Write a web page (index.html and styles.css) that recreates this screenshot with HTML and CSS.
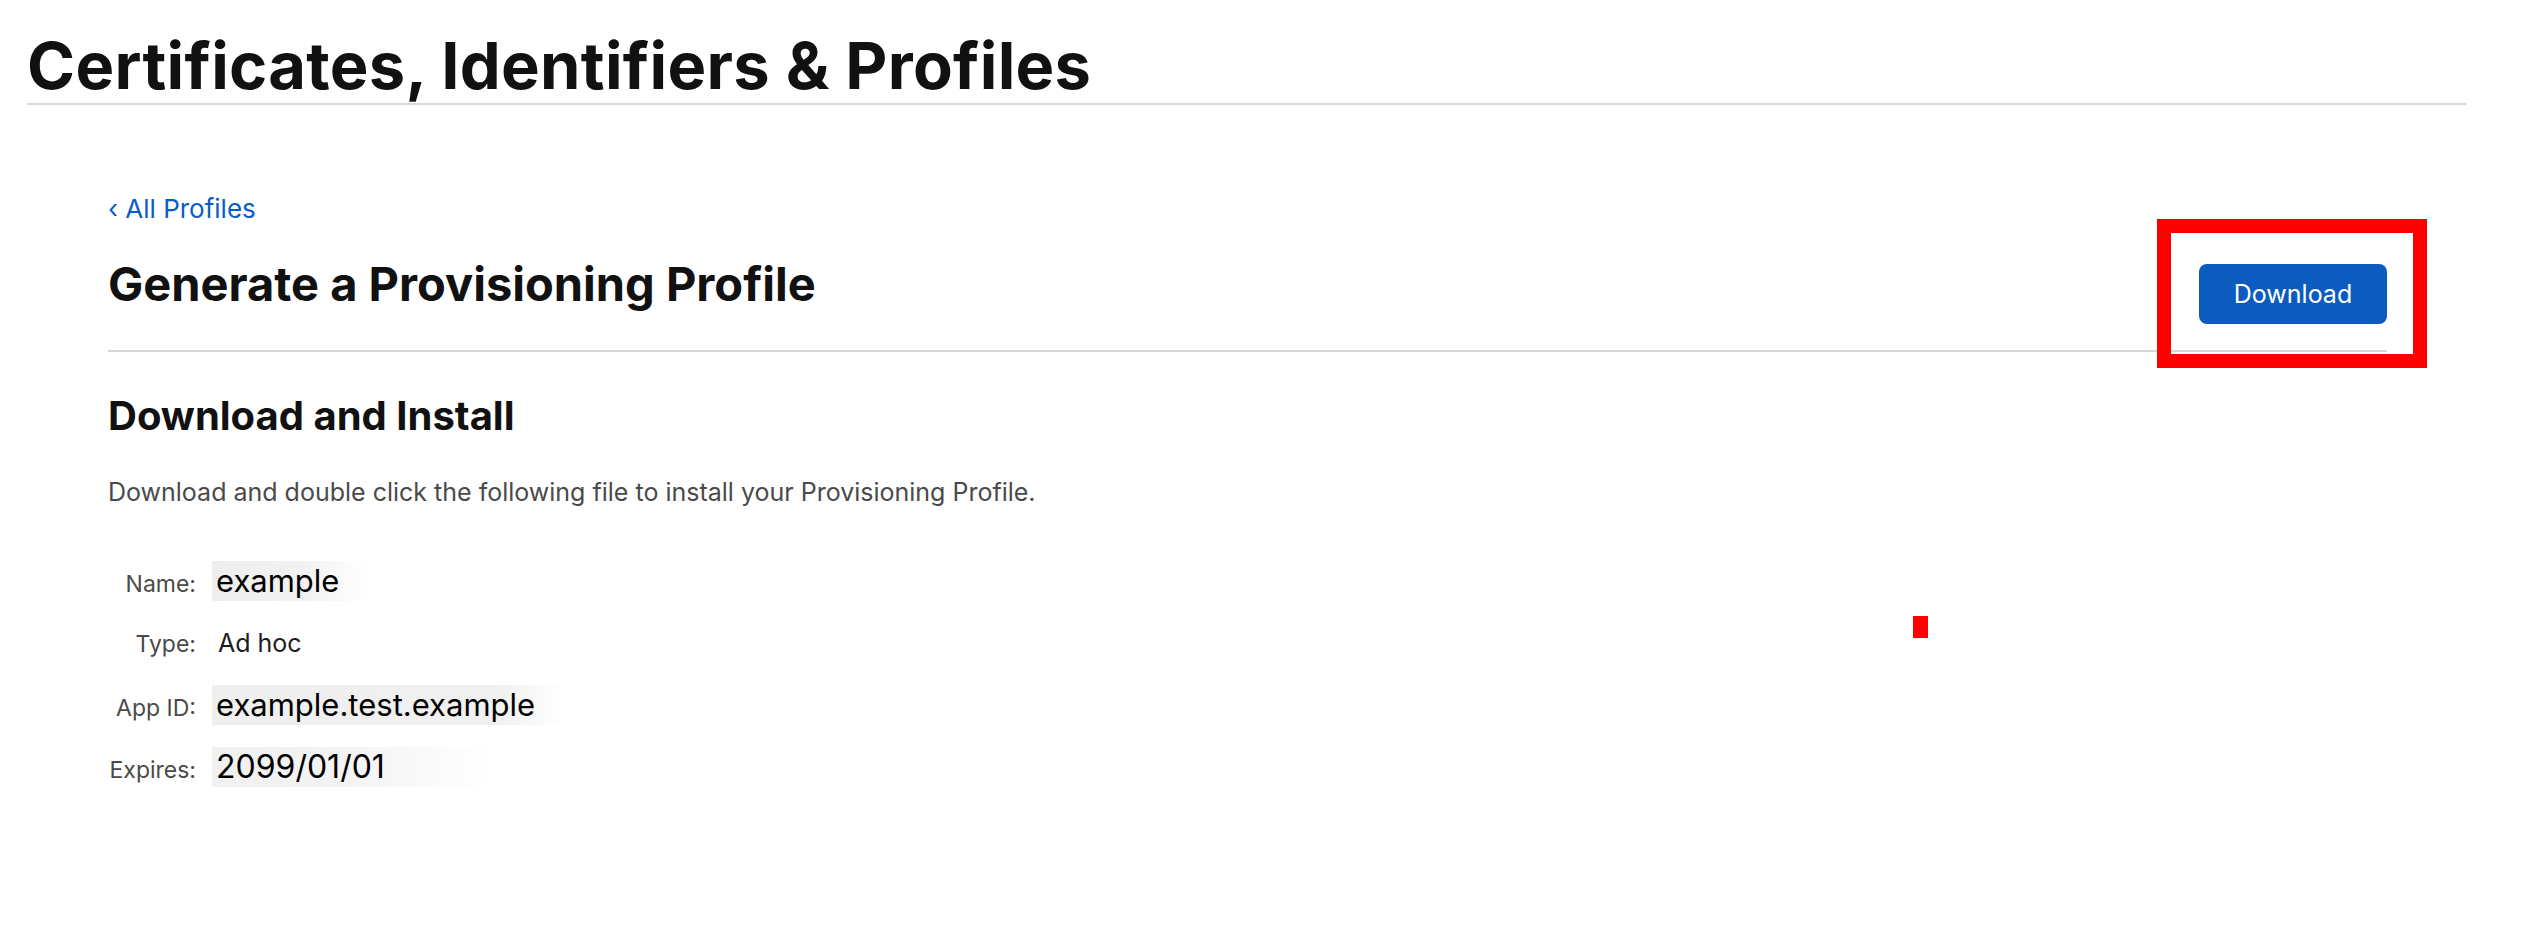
FILE: index.html
```html
<!DOCTYPE html>
<html lang="en">
<head>
<meta charset="utf-8">
<title>Certificates, Identifiers &amp; Profiles</title>
<link rel="stylesheet" href="styles.css">
</head>
<body>
<header class="top">
  <h1 class="top-title">Certificates, Identifiers &amp; Profiles</h1>
</header>
<main class="content">
  <a class="back" href="#">&lsaquo; All Profiles</a>
  <div class="head-row">
    <h2 class="page-title">Generate a Provisioning Profile</h2>
    <button class="btn">Download</button>
  </div>
  <h3 class="section-title">Download and Install</h3>
  <p class="desc">Download and double click the following file to install your Provisioning Profile.</p>
  <div class="details">
    <div class="label">Name:</div>
    <div class="value"><span class="smear smear-name">example</span></div>
    <div class="label">Type:</div>
    <div class="value"><span class="plain">Ad hoc</span></div>
    <div class="label">App ID:</div>
    <div class="value"><span class="smear smear-app">example.test.example</span></div>
    <div class="label">Expires:</div>
    <div class="value"><span class="smear smear-exp">2099/01/01</span></div>
  </div>
</main>
<div class="highlight"></div>
<div class="marker"></div>
</body>
</html>
```
FILE: styles.css
```css
html, body {
  margin: 0;
  padding: 0;
  background: #ffffff;
}
body {
  font-family: Inter, "Noto Sans", "Liberation Sans", sans-serif;
  color: #111111;
  width: 2524px;
  height: 940px;
  overflow: hidden;
  position: relative;
}
.top {
  margin: 0 57px 0 27px;
  padding-top: 30px;
  padding-bottom: 1px;
  border-bottom: 2px solid #dadada;
}
.top-title {
  margin: 0;
  font-size: 65px;
  line-height: 1.1;
  font-weight: 700;
  letter-spacing: 0.3px;
  color: #111111;
}
.content {
  margin: 0 137px 0 108px;
  padding-top: 88px;
}
.back {
  display: block;
  font-size: 26px;
  line-height: 1.2;
  color: #0a5dc4;
  text-decoration: none;
}
.head-row {
  display: flex;
  justify-content: space-between;
  align-items: flex-start;
  margin-top: 32px;
  padding-bottom: 26px;
  border-bottom: 2px solid #d7d7d7;
}
.page-title {
  margin: 0;
  font-size: 47px;
  line-height: 1.2;
  font-weight: 700;
  color: #111111;
}
.btn {
  margin-top: 8px;
  width: 188px;
  height: 60px;
  border: none;
  border-radius: 8px;
  background: #0b5cbe;
  color: #ffffff;
  font-family: Inter, "Noto Sans", sans-serif;
  font-size: 25px;
  font-weight: 400;
  padding: 0;
}
.section-title {
  margin: 40px 0 0;
  font-size: 40px;
  line-height: 1.2;
  font-weight: 700;
  color: #111111;
}
.desc {
  margin: 37px 0 0;
  font-size: 25px;
  line-height: 1.2;
  color: #4a4a4a;
}
.details {
  margin-top: 54px;
  display: grid;
  grid-template-columns: 88px 1fr;
  grid-auto-rows: 40px;
  row-gap: 22px;
  column-gap: 16px;
  align-items: baseline;
}
.label {
  text-align: right;
  font-size: 23px;
  line-height: 40px;
  color: #4a4a4a;
  white-space: nowrap;
}
.value {
  line-height: 40px;
}
.plain {
  display: inline-block;
  padding-left: 6px;
  font-size: 25px;
  color: #1d1d1f;
}
.smear {
  display: inline-block;
  padding-left: 4px;
  font-size: 31px;
  line-height: 40px;
  color: #000000;
}
.smear-name {
  padding-right: 30px;
  background: linear-gradient(to right, #eeeeee 0%, #f1f1f1 55%, rgba(255,255,255,0) 100%);
}
.smear-app {
  padding-right: 30px;
  background: linear-gradient(to right, #efefef 0%, #f0f0f0 80%, rgba(255,255,255,0) 100%);
}
.smear-exp {
  font-size: 32px;
  padding-right: 110px;
  background: linear-gradient(to right, #f0f0f0 0%, #f3f3f3 45%, rgba(255,255,255,0) 100%);
}
.highlight {
  position: absolute;
  left: 2157px;
  top: 219px;
  width: 242px;
  height: 121px;
  border: 14px solid #ff0000;
}
.marker {
  position: absolute;
  left: 1913px;
  top: 616px;
  width: 15px;
  height: 22px;
  background: #ff0000;
}
```
